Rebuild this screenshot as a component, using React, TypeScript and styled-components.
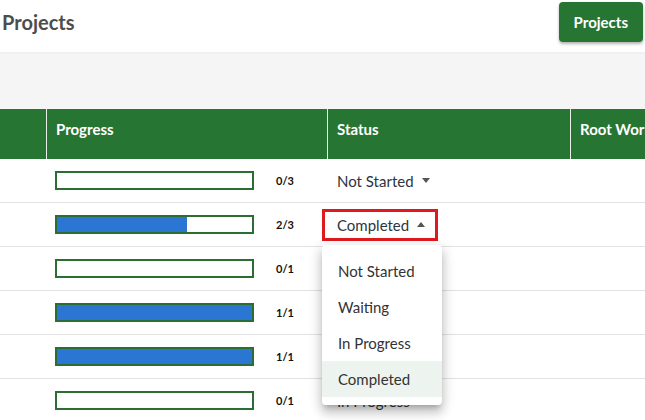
import React from 'react';
import styled, { createGlobalStyle } from 'styled-components';

const GREEN = '#277533';

const GlobalStyle = createGlobalStyle`
  html, body {
    margin: 0;
    padding: 0;
    background: #fff;
    font-family: Lato, "Open Sans", sans-serif;
    color: #333;
  }
  * { box-sizing: border-box; }
`;

const Page = styled.div`
  width: 645px;
  height: 420px;
  overflow: hidden;
  position: relative;
`;

const TopBar = styled.header`
  height: 52px;
  display: flex;
  justify-content: space-between;
  align-items: flex-start;
  background: #fff;
  position: relative;
  z-index: 1;
  box-shadow: 0 1px 3px rgba(0, 0, 0, 0.04);
`;

const Title = styled.h1`
  margin: 0;
  padding: 10px 0 0 2px;
  font-size: 20px;
  line-height: 24px;
  font-weight: 700;
  color: #4d4d4d;
`;

const NavButton = styled.button`
  margin: 2px 2px 0 0;
  height: 40px;
  padding: 0 15px;
  border: none;
  border-radius: 4px;
  background: ${GREEN};
  color: #fff;
  font-family: inherit;
  font-size: 15px;
  font-weight: 700;
  box-shadow: 0 2px 3px rgba(0, 0, 0, 0.3);
`;

const Toolbar = styled.div`
  height: 57px;
  background: #f5f5f5;
`;

const Grid = styled.div`
  display: grid;
  grid-template-columns: 46px 281px 243px 160px;
`;

const HeadCell = styled.div<{ $first?: boolean }>`
  height: 50px;
  background: ${GREEN};
  color: #fff;
  font-size: 15px;
  font-weight: 700;
  padding: 11px 0 0 9px;
  line-height: 18px;
  white-space: nowrap;
  overflow: hidden;
  border-left: ${({ $first }) => ($first ? 'none' : '1px solid #e8efe9')};
`;

const Cell = styled.div`
  height: 44px;
  border-bottom: 1px solid #e2e2e2;
  display: flex;
  align-items: center;
`;

const ProgressCell = styled(Cell)`
  padding-left: 9px;
  gap: 22px;
`;

const Bar = styled.div`
  width: 199px;
  height: 19px;
  border: 2px solid #2a6f31;
  background: #fff;
  margin-top: -1px;
`;

const Fill = styled.div`
  height: 100%;
  background: #2b76d2;
`;

const Count = styled.span`
  font-size: 11px;
  font-weight: 700;
  color: #111;
`;

const StatusCell = styled(Cell)`
  padding-left: 9px;
`;

const StatusSelect = styled.div<{ $open?: boolean }>`
  display: inline-flex;
  align-items: center;
  gap: 8px;
  height: 32px;
  margin-left: ${({ $open }) => ($open ? '-14px' : '0')};
  padding: ${({ $open }) => ($open ? '0 10px 0 12px' : '0 0 0 1px')};
  border: ${({ $open }) => ($open ? '3px solid #e0191e' : 'none')};
  font-size: 15px;
  color: #2e3440;
`;

const Caret = styled.span<{ $up?: boolean }>`
  width: 0;
  height: 0;
  border-left: 4.5px solid transparent;
  border-right: 4.5px solid transparent;
  ${({ $up }) =>
    $up ? 'border-bottom: 5px solid #555;' : 'border-top: 5px solid #555;'}
`;

const Menu = styled.ul`
  position: absolute;
  left: 322px;
  top: 245px;
  width: 120px;
  margin: 0;
  padding: 8px 0 8px;
  list-style: none;
  background: #fff;
  border-radius: 4px;
  box-shadow: 0 5px 5px -3px rgba(0, 0, 0, 0.2), 0 8px 10px 1px rgba(0, 0, 0, 0.14),
    0 3px 14px 2px rgba(0, 0, 0, 0.12);
  z-index: 5;
`;

const MenuItem = styled.li<{ $selected?: boolean }>`
  height: 36px;
  display: flex;
  align-items: center;
  padding-left: 16px;
  font-size: 15px;
  color: #333;
  background: ${({ $selected }) => ($selected ? '#edf3ee' : 'transparent')};
`;

type Row = { done: number; total: number; status: string };

// rows 3-5 have their status covered by the open menu
const rows: Row[] = [
  { done: 0, total: 3, status: 'Not Started' },
  { done: 2, total: 3, status: 'Completed' },
  { done: 0, total: 1, status: '' },
  { done: 1, total: 1, status: '' },
  { done: 1, total: 1, status: '' },
  { done: 0, total: 1, status: 'In Progress' },
];

const statuses = ['Not Started', 'Waiting', 'In Progress', 'Completed'];
const openRow = 1;

export default function App() {
  return (
    <Page>
      <GlobalStyle />
      <TopBar>
        <Title>Projects</Title>
        <NavButton>Projects</NavButton>
      </TopBar>
      <Toolbar />
      <Grid>
        <HeadCell $first />
        <HeadCell>Progress</HeadCell>
        <HeadCell>Status</HeadCell>
        <HeadCell>Root Work</HeadCell>
        {rows.map((r, i) => (
          <React.Fragment key={i}>
            <Cell />
            <ProgressCell>
              <Bar>
                <Fill style={{ width: `${(r.done / r.total) * 100}%` }} />
              </Bar>
              <Count>
                {r.done}/{r.total}
              </Count>
            </ProgressCell>
            <StatusCell>
              {r.status && (
                <StatusSelect $open={i === openRow}>
                  {r.status}
                  <Caret $up={i === openRow} />
                </StatusSelect>
              )}
            </StatusCell>
            <Cell />
          </React.Fragment>
        ))}
      </Grid>
      <Menu>
        {statuses.map((s) => (
          <MenuItem key={s} $selected={s === rows[openRow].status}>
            {s}
          </MenuItem>
        ))}
      </Menu>
    </Page>
  );
}
